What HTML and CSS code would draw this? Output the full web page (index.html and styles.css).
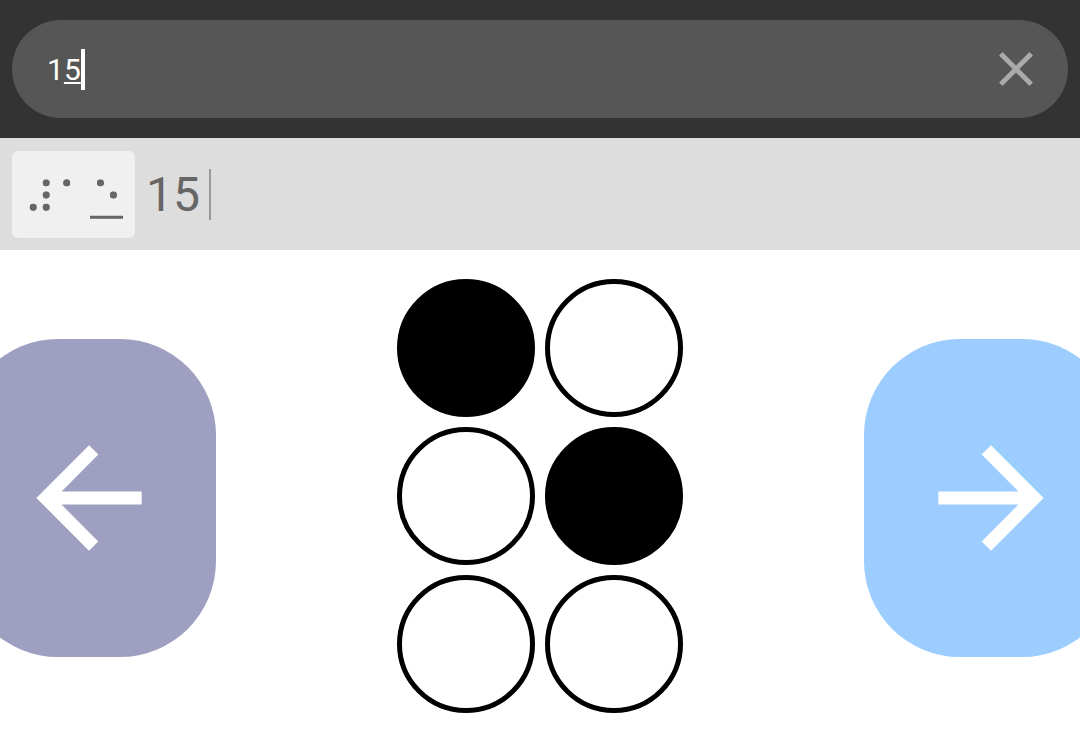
FILE: index.html
```html
<!DOCTYPE html>
<html>
<head>
<meta charset="utf-8">
<link rel="stylesheet" href="styles.css">
</head>
<body>
<div class="app">
  <header class="topbar">
    <div class="search">
      <div class="query"><span>1</span><span class="compose">5</span><span class="caret"></span></div>
      <svg class="clear" viewBox="0 0 24 24"><path d="M19 6.41L17.590 5 12 10.59 6.41 5 5 6.41 10.59 12 5 17.59 6.41 19 12 13.41 17.59 19 19 17.59 13.41 12z"/></svg>
    </div>
  </header>
  <div class="candbar">
    <div class="key">
      <svg class="braille" viewBox="0 0 123 87" width="123" height="87">
        <defs>
          <filter id="round" x="-20%" y="-20%" width="140%" height="140%">
            <feGaussianBlur stdDeviation="1.5"/>
            <feComponentTransfer>
              <feFuncA type="linear" slope="5" intercept="-1.6"/>
            </feComponentTransfer>
          </filter>
        </defs>
        <text class="btext" x="11.6" y="63.4" filter="url(#round)">⠼⠁⠑</text>
        <line class="bline" x1="78" y1="66.3" x2="111" y2="66.3"/>
      </svg>
    </div>
    <div class="candtext">15</div>
    <span class="candcaret"></span>
  </div>
  <main class="main">
    <button class="nav prev">
      <svg viewBox="0 0 24 24"><path d="M20 11H7.83l5.59-5.59L12 4l-8 8 8 8 1.41-1.41L7.83 13H20v-2z"/></svg>
    </button>
    <div class="cell">
      <div class="dot on"></div>
      <div class="dot"></div>
      <div class="dot"></div>
      <div class="dot on"></div>
      <div class="dot"></div>
      <div class="dot"></div>
    </div>
    <button class="nav next">
      <svg viewBox="0 0 24 24"><path d="M12 4l-1.41 1.41L16.17 11H4v2h12.17l-5.58 5.59L12 20l8-8z"/></svg>
    </button>
  </main>
</div>
</body>
</html>
```
FILE: styles.css
```css
html, body {
  margin: 0;
  padding: 0;
  width: 1080px;
  height: 746px;
  overflow: hidden;
  background: #ffffff;
  font-family: Roboto, "Noto Sans", sans-serif;
}
.app {
  display: flex;
  flex-direction: column;
  height: 746px;
}
.topbar {
  height: 138px;
  box-sizing: border-box;
  background: #333333;
  padding: 20px 12px;
}
.search {
  height: 98px;
  border-radius: 49px;
  background: #565656;
  display: flex;
  align-items: center;
  justify-content: space-between;
  padding: 0 23px 0 35px;
}
.query {
  display: flex;
  align-items: center;
  color: #ffffff;
  font-size: 30px;
  line-height: 41px;
  height: 41px;
}
.compose {
  text-decoration: underline;
  text-decoration-thickness: 2px;
  text-underline-offset: 2px;
}
.caret {
  width: 4px;
  height: 41px;
  background: #ffffff;
}
.clear {
  width: 58px;
  height: 58px;
  fill: #aaaaaa;
}
.candbar {
  height: 112px;
  box-sizing: border-box;
  background: #dddddd;
  padding: 13px 12px 12px;
  display: flex;
  align-items: center;
}
.key {
  width: 123px;
  height: 87px;
  background: #f0f0f0;
  border-radius: 6px;
  flex-shrink: 0;
}
.braille {
  display: block;
}
.btext {
  font-family: "DejaVu Sans", sans-serif;
  font-size: 44px;
  letter-spacing: 1.3px;
  fill: #666666;
}
.bline {
  stroke: #666666;
  stroke-width: 3px;
}
.candtext {
  margin-left: 11px;
  font-size: 48px;
  color: #666666;
  line-height: 56px;
}
.candcaret {
  width: 2px;
  height: 51px;
  margin-left: 9px;
  background: #999999;
}
.main {
  flex: 1;
  display: flex;
  justify-content: space-between;
  align-items: center;
  overflow: hidden;
}
.nav {
  width: 254px;
  height: 318px;
  border: none;
  border-radius: 96px;
  padding: 0;
  display: flex;
  align-items: center;
  justify-content: center;
  flex-shrink: 0;
}
.nav svg {
  width: 158px;
  height: 158px;
  fill: #ffffff;
}
.prev {
  background: #9fa0c1;
  margin-left: -38px;
}
.next {
  background: #9ccdfe;
  margin-right: -38px;
}
.cell {
  display: grid;
  grid-template-columns: 138px 138px;
  grid-template-rows: 138px 138px 138px;
  gap: 10px;
  align-self: flex-start;
  margin-top: 29px;
}
.dot {
  box-sizing: border-box;
  border: 5px solid #000000;
  border-radius: 50%;
  background: #ffffff;
}
.dot.on {
  background: #000000;
}
```
